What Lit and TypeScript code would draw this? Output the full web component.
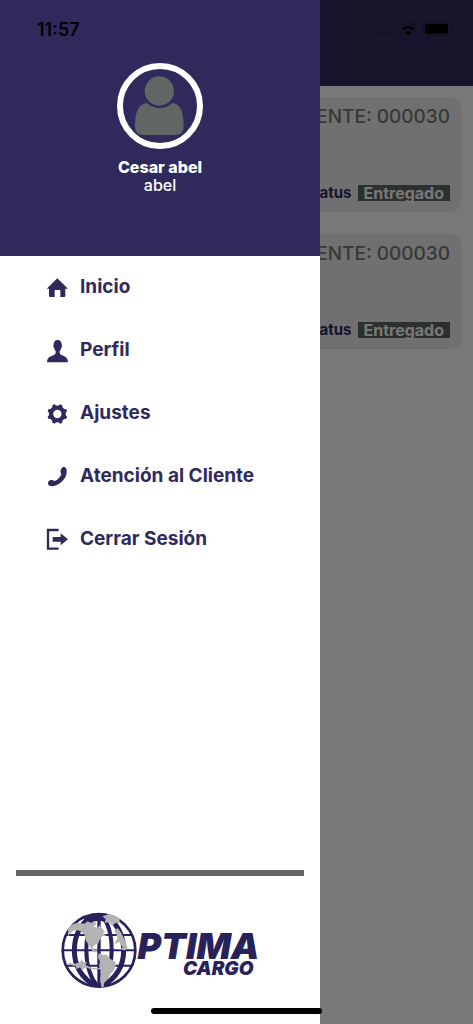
import { LitElement, html, css, svg } from "lit";
import { customElement, property } from "lit/decorators.js";

const ICONS: Record<string, unknown> = {
  home: svg`<path d="M34 4 L66 35 H58 V57 Q58 60 55 60 H43 V39 H26 V60 H12 Q9 60 9 57 V35 H2 Z"/>`,
  person: svg`<path d="M35 0 C43 0 47 6 47 14 C49 16 48 21 46 23 C45 28 42 31 41 34 C40 40 42 43 48 46 C58 50 65 52 66 67 H3 C4 52 12 50 22 46 C28 43 30 40 29 34 C28 31 25 28 24 23 C22 21 21 16 23 14 C23 6 27 0 35 0 Z"/>`,
  gear: svg`<circle cx="34" cy="33" r="19" fill="none" stroke="currentColor" stroke-width="13"/>
    ${[22.5, 67.5, 112.5, 157.5].map(
      (a) => svg`<path transform="rotate(${a} 34 33)" d="M30 3 H38 L41 12 H27 Z M27 54 H41 L38 63 H30 Z"/>`
    )}`,
  phone: svg`<path d="M46 8 C48 2 58 1 61 8 C65 22 58 38 46 48 C34 59 18 64 8 58 C4 53 6 45 12 43 C17 41 21 43 26 45 C34 43 44 32 46 24 C42 19 43 13 46 8 Z"/>`,
  exit: svg`<path d="M38 3 H6 V59 H38" fill="none" stroke="currentColor" stroke-width="7"/>
    <path d="M20 24 H44 V13 L66 31 L44 49 V38 H20 Z"/>`,
};

const MENU = [
  { icon: "home", label: "Inicio" },
  { icon: "person", label: "Perfil" },
  { icon: "gear", label: "Ajustes" },
  { icon: "phone", label: "Atención al Cliente" },
  { icon: "exit", label: "Cerrar Sesión" },
];

const SHIPMENTS = [
  { client: "000030", status: "Entregado" },
  { client: "000030", status: "Entregado" },
];

@customElement("shipment-card")
class ShipmentCard extends LitElement {
  @property() client = "";
  @property() status = "";

  static styles = css`
    :host {
      display: flex;
      flex-direction: column;
      justify-content: space-between;
      align-items: flex-end;
      box-sizing: border-box;
      min-height: 115px;
      padding: 8px 11px 11px;
      border-radius: 10px;
      background: #eeeeee;
    }
    .client {
      margin: 0;
      font-size: 19px;
      line-height: 24px;
      font-weight: 500;
      color: #737876;
    }
    .status {
      display: flex;
      gap: 6px;
      margin: 0;
      font-size: 15px;
      line-height: 16px;
      font-weight: 700;
      color: #2f2a5b;
    }
    .badge {
      padding: 0 6px;
      background: #5f6664;
      color: #ffffff;
      font-size: 16px;
    }
  `;

  render() {
    return html`
      <h2 class="client">CLIENTE: ${this.client}</h2>
      <p class="status">Estatus <span class="badge">${this.status}</span></p>
    `;
  }
}

@customElement("brand-logo")
class BrandLogo extends LitElement {
  static styles = css`
    :host {
      display: flex;
      justify-content: center;
      align-items: center;
      gap: 1px;
      color: #28225c;
    }
    .globe {
      width: 76px;
      height: 76px;
      flex: none;
    }
    .words {
      display: flex;
      flex-direction: column;
      align-items: flex-end;
      font-style: italic;
      font-weight: 900;
      padding-top: 10px;
    }
    .top {
      font-size: 36px;
      line-height: 28px;
    }
    .bottom {
      font-size: 19px;
      line-height: 18px;
      padding-right: 6px;
    }
  `;

  render() {
    return html`
      <svg class="globe" viewBox="33 36 228 228" aria-hidden="true">
        <defs><clipPath id="disc"><circle cx="147" cy="151" r="112"/></clipPath></defs>
        <g fill="none" stroke="#28225c">
          <circle cx="147" cy="151" r="109" stroke-width="8"/>
          <g clip-path="url(#disc)">
            <path d="M40 151 H254 M50 105 H244 M50 197 H244" stroke-width="6"/>
            <path d="M147 40 V262" stroke-width="10"/>
            <path d="M135 44 C92 64 73 108 73 151 C73 198 96 236 140 260" stroke-width="15"/>
            <path d="M159 44 C202 64 221 108 221 151 C221 198 198 236 154 260" stroke-width="15"/>
            <path d="M140 44 C117 70 109 110 109 151 C109 196 120 232 143 260" stroke-width="12"/>
            <path d="M154 44 C177 70 185 110 185 151 C185 196 174 232 151 260" stroke-width="12"/>
          </g>
        </g>
        <path fill="#28225c" d="M100 54 Q147 26 194 54 L168 68 Q146 56 118 70 Z"/>
        <g fill="#b3b3b3">
          <path d="M54 87 Q68 67 86 69 L104 71 L112 64 L124 69 L132 62 L139 73 L130 80 L143 83 L149 75 L157 86 L165 96 L158 99 L170 108 L157 108 L149 120 L144 133 L137 132 L128 142 L134 151 L142 148 L139 158 L127 153 L119 138 L108 123 L104 106 L92 94 L79 90 L68 93 L54 109 Z"/>
          <path d="M157 49 L177 42 L198 49 L210 58 L207 70 L197 68 L186 78 L179 67 L164 68 L167 57 Z"/>
          <path d="M146 160 L158 164 L170 164 L180 176 L194 184 L198 193 L192 211 L180 223 L173 238 L163 248 L160 263 L154 261 L151 238 L154 216 L147 199 L150 184 L144 173 Z"/>
          <path d="M193 91 L203 84 L212 96 L224 119 L233 146 L225 151 L206 148 L218 143 L209 126 L193 132 L203 113 Z"/>
          <path d="M53 187 L72 192 L91 187 L94 177 L100 187 L112 186 L105 194 L126 204 L150 204 V208 L123 208 L108 202 L95 211 L91 202 L79 207 L78 199 L59 194 Z"/>
        </g>
      </svg>
      <div class="words">
        <span class="top">PTIMA</span>
        <span class="bottom">CARGO</span>
      </div>
    `;
  }
}

@customElement("app-root")
class AppRoot extends LitElement {
  static styles = css`
    :host {
      display: grid;
      position: relative;
      min-height: 100vh;
      font-family: Inter, "Open Sans", sans-serif;
      background: #ffffff;
      overflow: hidden;
    }
    .page,
    .scrim,
    .drawer {
      grid-area: 1 / 1;
    }
    .appbar {
      height: 86px;
      background: #322d5f;
    }
    .cards {
      display: grid;
      gap: 22px;
      padding: 11px 12px;
    }
    .scrim {
      background: rgba(0, 0, 0, 0.53);
      z-index: 1;
    }
    .drawer {
      z-index: 2;
      display: flex;
      flex-direction: column;
      width: min(320px, 85vw);
      background: #ffffff;
    }
    .profile {
      display: flex;
      flex-direction: column;
      align-items: center;
      box-sizing: border-box;
      min-height: 256px;
      padding: 63px 16px 16px;
      background: #2f2a5b;
      color: #ffffff;
      font-size: 16px;
      line-height: 18px;
    }
    .avatar {
      box-sizing: border-box;
      width: 86px;
      height: 86px;
      margin-bottom: 9px;
      border: 6px solid #ffffff;
      border-radius: 50%;
      fill: #5f6664;
    }
    .name {
      font-weight: 800;
    }
    .user {
      font-weight: 500;
    }
    .item {
      display: flex;
      align-items: center;
      gap: 12px;
      height: 63px;
      padding: 0 16px 0 46px;
      color: #2f2a5b;
      font-size: 19px;
      line-height: 24px;
      font-weight: 700;
      text-decoration: none;
    }
    .label {
      padding-bottom: 1px;
    }
    .icon {
      width: 22px;
      height: 22px;
      flex: none;
      fill: currentColor;
      overflow: visible;
    }
    .foot {
      margin-top: auto;
      padding: 0 16px 36px;
    }
    .rule {
      height: 6px;
      margin: 0 0 36px;
      border: 0;
      background: #5f6664;
    }
    .statusbar {
      position: absolute;
      z-index: 3;
      top: 0;
      left: 0;
      right: 0;
      display: flex;
      justify-content: space-between;
      align-items: center;
      height: 58px;
      padding: 0 20px 0 37px;
      font-size: 18px;
      font-weight: 600;
      color: #000000;
    }
    .signals {
      width: 81px;
      height: 16px;
    }
    .homebar {
      position: absolute;
      z-index: 3;
      bottom: 10px;
      left: 32%;
      right: 32%;
      height: 6px;
      border-radius: 3px;
      background: #000000;
    }
  `;

  render() {
    return html`
      <main class="page">
        <header class="appbar"></header>
        <section class="cards">
          ${SHIPMENTS.map(
            (s) => html`<shipment-card client=${s.client} status=${s.status}></shipment-card>`
          )}
        </section>
      </main>
      <div class="scrim"></div>
      <aside class="drawer">
        <header class="profile">
          <svg class="avatar" viewBox="369 208 222 222" aria-hidden="true">
            <circle cx="478" cy="274" r="44"/>
            <path d="M441 310 C461 330 496 330 516 310 C543 312 551 340 551 380 Q551 406 526 406 H430 Q405 406 405 380 C405 340 414 312 441 310 Z"/>
          </svg>
          <span class="name">Cesar abel</span>
          <span class="user">abel</span>
        </header>
        <nav>
          ${MENU.map(
            (m) => html`<a class="item" href="#">
              <svg class="icon" viewBox="0 0 66 66" aria-hidden="true">${ICONS[m.icon]}</svg>
              <span class="label">${m.label}</span>
            </a>`
          )}
        </nav>
        <footer class="foot">
          <hr class="rule" />
          <brand-logo></brand-logo>
        </footer>
      </aside>
      <div class="statusbar">
        <span>11:57</span>
        <svg class="signals" viewBox="0 0 81 16" aria-hidden="true">
          <g fill="#121026">
            <circle cx="3" cy="12" r="2"/><circle cx="9" cy="12" r="2"/>
            <circle cx="15" cy="12" r="2"/><circle cx="20" cy="12" r="2"/>
          </g>
          <g fill="none" stroke-width="2">
            <path d="M29 5 Q36.500 -1 44 5" stroke="#121026"/>
            <path d="M31 8.500 Q36.500 3.500 42 8.500" stroke="#000000" stroke-width="2.500"/>
          </g>
          <path d="M33.500 11.500 Q36.500 9 39.500 11.500 L36.500 14.500 Z"/>
          <rect x="51.500" y="1" width="27" height="13" rx="4" fill="none" stroke="#0f0d20"/>
          <rect x="53" y="3" width="23" height="9.500" rx="2"/>
          <path d="M80 5.500 Q82 7.500 80 9.500 Z" fill="#0f0d20"/>
        </svg>
      </div>
      <div class="homebar"></div>
    `;
  }
}
